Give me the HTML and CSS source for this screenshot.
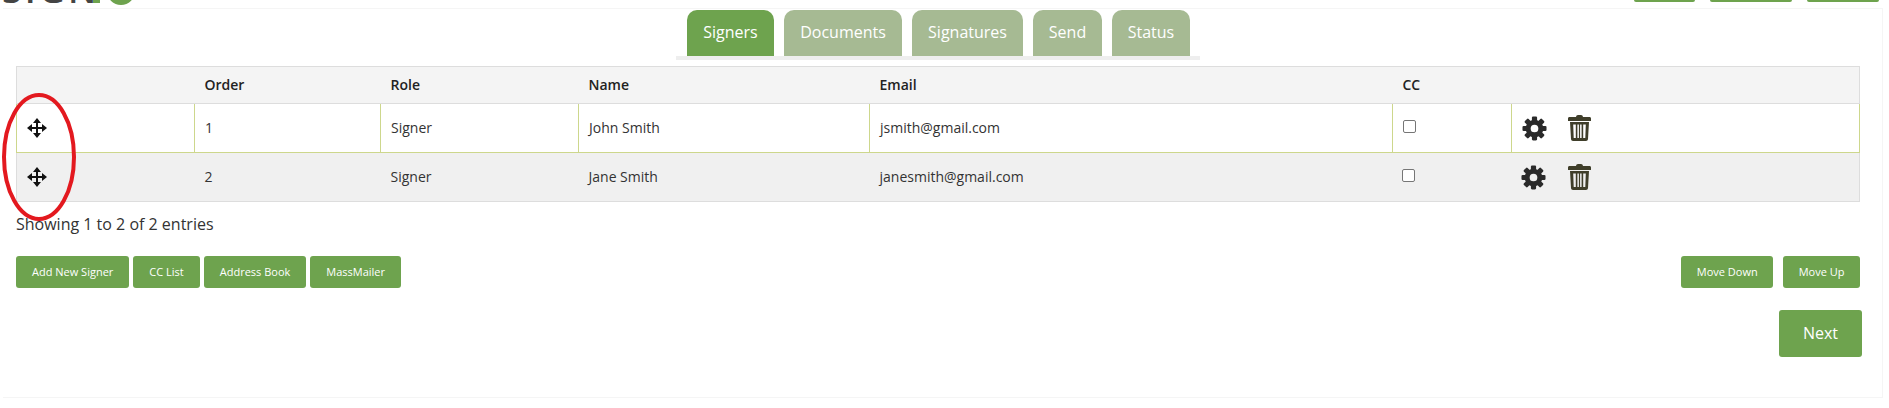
FILE: index.html
```html
<!DOCTYPE html>
<html lang="en">
<head>
<meta charset="utf-8">
<title>Signers</title>
<link rel="stylesheet" href="styles.css">
</head>
<body>
<svg class="defs" aria-hidden="true">
  <symbol id="i-move" viewBox="0 0 20 20"><path d="M10 0l4 5h-3v4h4V6l5 4-5 4v-3h-4v4h3l-4 5-4-5h3v-4H5v3l-5-4 5-4v3h4V5H6z"/></symbol>
  <symbol id="i-gear" viewBox="0 0 26 26">
    <circle class="gear-ring" cx="13" cy="13" r="6.600"/>
    <rect x="10.300" y="0.500" width="5.400" height="6" rx="1.200"/>
    <rect x="10.300" y="0.500" width="5.400" height="6" rx="1.200" transform="rotate(45 13 13)"/>
    <rect x="10.300" y="0.500" width="5.400" height="6" rx="1.200" transform="rotate(90 13 13)"/>
    <rect x="10.300" y="0.500" width="5.400" height="6" rx="1.200" transform="rotate(135 13 13)"/>
    <rect x="10.300" y="0.500" width="5.400" height="6" rx="1.200" transform="rotate(180 13 13)"/>
    <rect x="10.300" y="0.500" width="5.400" height="6" rx="1.200" transform="rotate(225 13 13)"/>
    <rect x="10.300" y="0.500" width="5.400" height="6" rx="1.200" transform="rotate(270 13 13)"/>
    <rect x="10.300" y="0.500" width="5.400" height="6" rx="1.200" transform="rotate(315 13 13)"/>
  </symbol>
  <symbol id="i-trash" viewBox="0 0 23 26"><path fill-rule="evenodd" d="M8 2C8.200.7 8.800 0 10 0h3c1.200 0 1.800.7 2 2h6.500c.9 0 1.500.6 1.500 1.500V6H0V3.500C0 2.600.6 2 1.500 2zM2 7h19l-1 17c-.1 1.200-.9 2-2 2H5c-1.100 0-1.900-.8-2-2zM5.200 9.500l.5 13.500h2.100V9.500zm4.200 0V23h1.500V9.500zm2.700 0V23h1.500V9.500zm3.100 0V23h2.100l.5-13.500z"/></symbol>
</svg>
<header class="top">
  <div class="logo"><span class="logo-text">SIGN</span><span class="logo-mark"></span><span class="logo-dot"></span></div>
  <div class="top-actions"><span class="tb w1"></span><span class="tb w2"></span><span class="tb w3"></span></div>
</header>
<main class="panel">
  <nav class="tabs">
    <a class="tab active t1">Signers</a><a class="tab t2">Documents</a><a class="tab t3">Signatures</a><a class="tab t4">Send</a><a class="tab t5">Status</a>
  </nav>
  <div class="table-wrap">
    <table class="grid">
      <colgroup><col class="c1"><col class="c2"><col class="c3"><col class="c4"><col class="c5"><col class="c6"><col></colgroup>
      <thead><tr><th></th><th>Order</th><th>Role</th><th>Name</th><th>Email</th><th>CC</th><th></th></tr></thead>
      <tbody>
        <tr>
          <td class="icon"><svg class="move"><use href="#i-move"/></svg></td>
          <td>1</td><td>Signer</td><td>John Smith</td><td>jsmith@gmail.com</td>
          <td class="icon"><span class="check"></span></td>
          <td class="icon"><div class="acts"><svg class="gear"><use href="#i-gear"/></svg><svg class="trash"><use href="#i-trash"/></svg></div></td>
        </tr>
        <tr class="alt">
          <td class="icon"><svg class="move"><use href="#i-move"/></svg></td>
          <td>2</td><td>Signer</td><td>Jane Smith</td><td>janesmith@gmail.com</td>
          <td class="icon"><span class="check"></span></td>
          <td class="icon"><div class="acts"><svg class="gear"><use href="#i-gear"/></svg><svg class="trash"><use href="#i-trash"/></svg></div></td>
        </tr>
      </tbody>
    </table>
    <svg class="ring" viewBox="0 0 76 130"><ellipse cx="37" cy="65" rx="35" ry="62"/></svg>
  </div>
  <p class="info">Showing 1 to 2 of 2 entries</p>
  <div class="btn-row">
    <div class="btn-group"><a class="btn">Add New Signer</a><a class="btn">CC List</a><a class="btn">Address Book</a><a class="btn">MassMailer</a></div>
    <div class="btn-group right"><a class="btn">Move Down</a><a class="btn">Move Up</a></div>
  </div>
  <div class="next-row"><a class="btn-next">Next</a></div>
</main>
</body>
</html>
```
FILE: styles.css
```css
* { box-sizing: border-box; }
html, body { margin: 0; padding: 0; background: #fff; overflow: hidden; }
body { width: 1889px; height: 408px; font-family: "Open Sans", "Liberation Sans", sans-serif; color: #333; }
.defs { display: none; }
.top { height: 8px; display: flex; justify-content: space-between; overflow: hidden; }
.logo { display: flex; height: 8px; padding-left: 2px; }
.logo-text { display: block; height: 36px; margin-top: -28px; font-size: 36px; line-height: 36px; letter-spacing: 3px; color: #444; font-weight: 600; width: 91px; }
.logo-mark { display: block; width: 7px; height: 3px; background: #6ea34e; }
.logo-dot { display: block; width: 28px; height: 28px; border-radius: 50%; background: #6ea34e; margin: -23px 0 0 7px; }
.top-actions { display: flex; gap: 15px; margin-right: 10px; }
.tb { display: block; height: 2px; background: #6ea34e; border-radius: 0 0 4px 4px; }
.w1 { width: 61px; } .w2 { width: 82px; } .w3 { width: 72px; }
.panel { margin: 0 6px 0 3px; height: 390px; border: 1px solid #f5f5f5; border-left: 0; padding: 1px 0 0 13px; }
.tabs { width: 524px; margin: 0 0 6px 660px; height: 50px; padding-left: 11px; display: flex; gap: 10px; border-bottom: 4px solid #eee; }
.tab { display: block; height: 46px; border-radius: 10px 10px 0 0; background: #a6ba93; color: #fff; font-size: 16px; line-height: 44px; text-align: center; }
.tab.active { background: #6ea34e; }
.t1 { width: 87px; } .t2 { width: 118px; } .t3 { width: 111px; } .t4 { width: 69px; } .t5 { width: 78px; }
.table-wrap { position: relative; width: 1844px; }
.grid { width: 1844px; border-collapse: collapse; table-layout: fixed; font-size: 14px; }
.c1 { width: 178px; } .c2 { width: 186px; } .c3 { width: 198px; } .c4 { width: 291px; } .c5 { width: 523px; } .c6 { width: 119px; }
.grid th { height: 37px; background: #f4f4f4; border: 1px solid #ddd; border-left: 0; border-right: 0; text-align: left; font-weight: 600; color: #222; padding: 0 10px 2px; }
.grid thead tr { border-left: 1px solid #ddd; border-right: 1px solid #ddd; }
.grid td { height: 49px; padding: 0 10px 2px; border: 1px solid #cdd78c; color: #333; vertical-align: middle; }
.grid td.icon { padding-bottom: 0; }
.grid .alt td { background: #f0f0f0; border: 0; border-bottom: 1px solid #ddd; }
.grid .alt td:first-child { border-left: 1px solid #ddd; }
.grid .alt td:last-child { border-right: 1px solid #ddd; }
.move { display: block; width: 20px; height: 20px; fill: #111; }
.check { display: block; width: 13px; height: 13px; border: 1px solid #767676; border-radius: 2px; background: #fff; margin-top: -3px; }
.alt .check { margin-left: -1px; }
.acts { display: flex; align-items: center; gap: 21px; }
.gear { width: 25px; height: 25px; fill: #2a2a2a; stroke: #2a2a2a; stroke-width: 0; }
.gear-ring { fill: none; stroke-width: 5.200px; }
.alt .gear { margin: 0 1px 0 -1px; }
.trash { width: 23px; height: 26px; fill: #3f3e2a; }
.ring { position: absolute; left: -14px; top: 26px; width: 76px; height: 130px; fill: none; stroke: #e3191f; stroke-width: 4px; }
.info { margin: 0; padding-top: 11px; font-size: 16px; line-height: 22px; color: #333; }
.btn-row { display: flex; justify-content: space-between; margin-top: 21px; width: 1844px; }
.btn-group { display: flex; gap: 4px; }
.btn-group.right { gap: 10px; }
.btn { display: block; height: 32px; padding: 0 16px; border-radius: 3px; background: #6ea34e; color: #fff; font-size: 11px; line-height: 32px; }
.right .btn { padding: 0 15.500px; }
.next-row { display: flex; justify-content: flex-end; width: 1846px; margin-top: 22px; }
.btn-next { display: block; width: 83px; height: 47px; border-radius: 3px; background: #6ea34e; color: #fff; font-size: 16px; line-height: 47px; text-align: center; }
```
